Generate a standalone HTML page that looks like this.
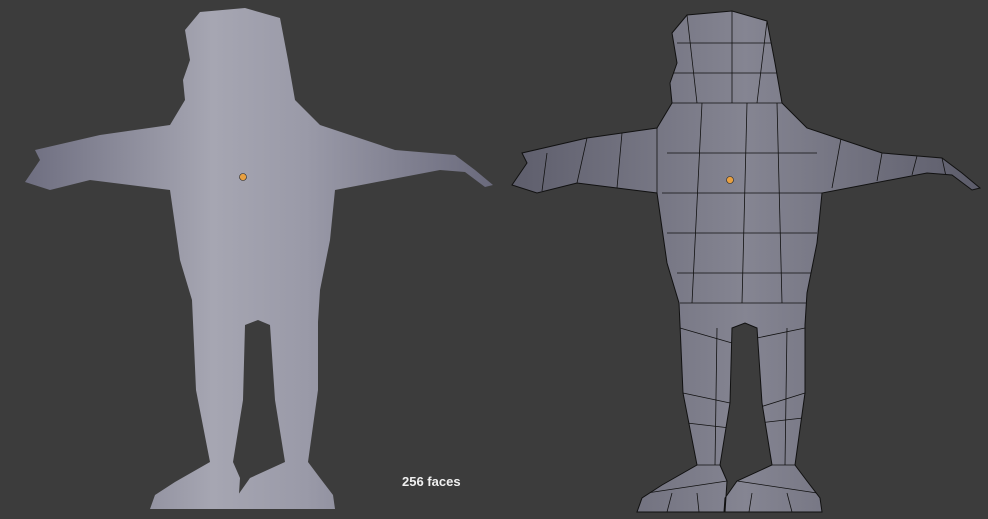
<!DOCTYPE html>
<html><head><style>
html,body{margin:0;padding:0;background:#3c3c3c;width:988px;height:519px;overflow:hidden}
svg{display:block}
.t{font-family:"Liberation Sans",sans-serif;font-weight:bold;font-size:13px;fill:#f0f0f0}
</style></head><body>
<svg width="988" height="519" viewBox="0 0 988 519">
<defs>
<linearGradient id="g1" x1="0" y1="0" x2="1" y2="0">
<stop offset="0" stop-color="#6e6e80"/><stop offset="0.4" stop-color="#a6a6b2"/><stop offset="0.6" stop-color="#9a9aa8"/><stop offset="1" stop-color="#6a6a7c"/>
</linearGradient>
<linearGradient id="g2" x1="0" y1="0" x2="1" y2="0">
<stop offset="0" stop-color="#5e5e6c"/><stop offset="0.5" stop-color="#858592"/><stop offset="1" stop-color="#5c5c6a"/>
</linearGradient>
<path id="body" d="M185,30 L200,12 L245,8 L280,18 L288,60 L295,100 L320,125 L395,150 L455,155 L475,170 L493,185 L485,187 L465,172 L440,170 L335,190 L330,240 L320,290 L318,322 L318,390 L308,462 L320,478 L333,495 L335,509 L237,509 L238,495 L250,478 L285,462 L275,400 L270,325 L258,320 L245,325 L243,400 L233,462 L240,478 L238,509 L150,509 L155,495 L175,482 L210,462 L196,390 L193,322 L192,300 L180,260 L170,190 L90,180 L50,190 L25,182 L40,160 L35,150 L100,135 L170,125 L185,100 L183,80 L190,60 Z"/>
<clipPath id="cp"><use href="#body"/></clipPath>
</defs>
<use href="#body" fill="url(#g1)"/>
<circle cx="243" cy="177" r="3.5" fill="#e8a040" stroke="#222" stroke-width="0.6"/>
<g transform="translate(487,3)">
<use href="#body" fill="url(#g2)" stroke="#111" stroke-width="1"/>
<g clip-path="url(#cp)" stroke="#111" stroke-width="0.8" fill="none">
<path d="M170,125 L170,190 M185,100 L295,100 M180,150 L330,150 M175,190 L335,190 M180,230 L330,230 M190,270 L325,270 M193,300 L320,300 M193,325 L245,340 M270,335 L318,325 M196,390 L243,400 M270,405 L318,390 M200,420 L243,425 M272,420 L316,415 M205,462 L235,462 M285,462 L310,462 M160,490 L240,478 M250,478 L330,490"/>
<path d="M215,100 L205,300 M260,100 L255,300 M290,100 L295,300 M230,325 L228,462 M300,325 L298,462 M185,490 L180,509 M210,490 L212,509 M265,490 L262,509 M300,490 L305,509"/>
<path d="M100,135 L90,180 M135,130 L130,185 M60,150 L55,188 M355,130 L345,185 M395,150 L390,178 M430,153 L425,172 M455,155 L460,178"/>
<path d="M200,12 L210,100 M245,8 L245,100 M280,18 L270,100 M190,40 L285,40 M185,70 L290,70"/>
</g>
<circle cx="243" cy="177" r="3.5" fill="#e8a040" stroke="#222" stroke-width="0.6"/>
</g>
<text class="t" x="402" y="486">256 faces</text>
</svg>
</body></html>
